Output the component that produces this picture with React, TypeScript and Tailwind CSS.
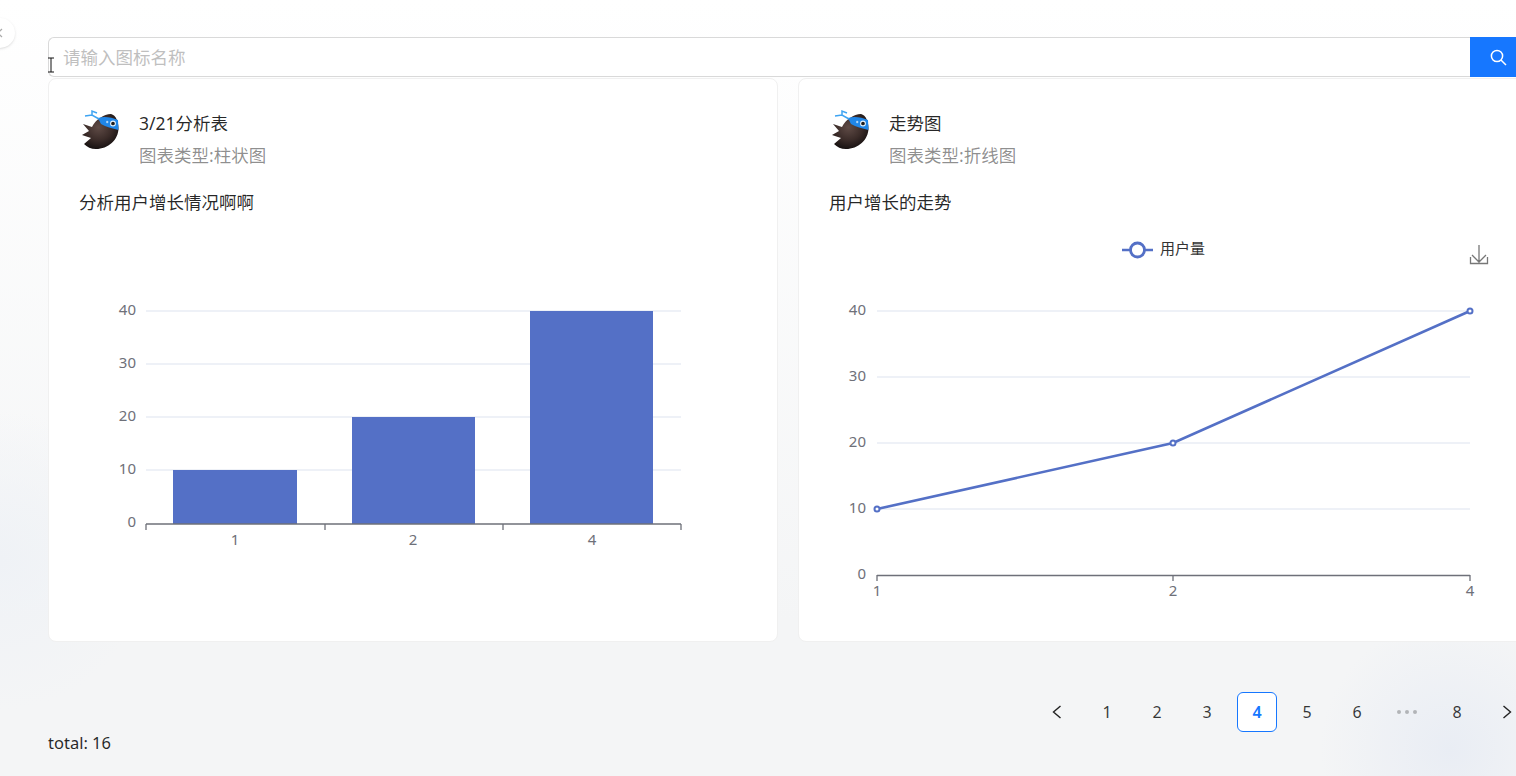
const pages = ["1", "2", "3", "4", "5", "6", "...", "8"];

function Avatar() {
  return (
    <svg width="40" height="40" viewBox="0 0 40 40" className="shrink-0">
      <defs>
        <radialGradient id="bird" cx="0.45" cy="0.38" r="0.68">
          <stop offset="0" stopColor="#5f4b46" />
          <stop offset="0.55" stopColor="#3a2b28" />
          <stop offset="1" stopColor="#100c0c" />
        </radialGradient>
      </defs>
      <path
        d="M3 15 L12 18 C15 11 24 5 31 5 C36 6 38.5 13 38.5 19 C38.5 31 28 40 16 40 C11 40 7 38 4 35 L11 29 L2 26 L9 22 Z"
        fill="url(#bird)"
      />
      <path d="M18 9 C24 7 31 8 38 11 L38.5 21 C32 19 26 18 21 15 Z" fill="#1f86e8" />
      <path d="M19 10 L12 6 L5 7 M12 6 L12 2 L17 4" stroke="#3fa4f2" strokeWidth="1.5" fill="none" />
      <circle cx="33" cy="14.5" r="2.4" fill="#1c1c1c" stroke="#e6f2fb" strokeWidth="1.1" />
      <path d="M26 13 H28.4 M27.2 11.8 V14.2" stroke="#e6f2fb" strokeWidth="0.8" />
    </svg>
  );
}

function AxisText({ x, y, anchor, children }: { x: number; y: number; anchor: "end" | "middle"; children: string }) {
  return (
    <text x={x} y={y} textAnchor={anchor} dominantBaseline="central" fontSize="15" fill="#6e7079" fontFamily="'Noto Sans', sans-serif">
      {children}
    </text>
  );
}

function BarChart() {
  const grid = [311, 364, 417, 470];
  const bars = [
    { x: 173, y: 470, w: 124, h: 54 },
    { x: 352, y: 417, w: 123, h: 107 },
    { x: 530, y: 311, w: 123, h: 213 },
  ];
  return (
    <svg viewBox="79 228 700 400" className="h-[400px] w-[700px]">
      {grid.map((y) => (
        <line key={y} x1="146" x2="681" y1={y} y2={y} stroke="#dde3f0" strokeWidth="1.2" />
      ))}
      {bars.map((b) => (
        <rect key={b.x} x={b.x} y={b.y} width={b.w} height={b.h} fill="#5470c6" />
      ))}
      <line x1="146" x2="681" y1="524" y2="524" stroke="#6e7079" strokeWidth="1.4" />
      {[146, 325, 503, 681].map((x) => (
        <line key={x} x1={x} x2={x} y1="524" y2="530" stroke="#6e7079" strokeWidth="1.3" />
      ))}
      {["40", "30", "20", "10", "0"].map((t, i) => (
        <AxisText key={t} x={136} y={[309, 362, 415, 468, 521][i]} anchor="end">
          {t}
        </AxisText>
      ))}
      <AxisText x={235} y={539} anchor="middle">1</AxisText>
      <AxisText x={413} y={539} anchor="middle">2</AxisText>
      <AxisText x={592} y={539} anchor="middle">4</AxisText>
    </svg>
  );
}

function LineChart() {
  const points = [
    [877, 509],
    [1173, 443],
    [1470, 311],
  ];
  return (
    <svg viewBox="829 228 700 400" className="h-[400px] w-[700px]">
      <line x1="1122" x2="1153" y1="250" y2="250" stroke="#5470c6" strokeWidth="2.6" />
      <circle cx="1137.5" cy="250" r="7" fill="#fff" stroke="#5470c6" strokeWidth="2.8" />
      <text x="1160" y="247" dominantBaseline="central" fontSize="15" fill="#333" fontFamily="'Noto Sans CJK SC', sans-serif">
        用户量
      </text>
      <path d="M1479 245 V262 M1472 255 L1479 262 L1486 255 M1470.5 257 V263.5 H1487.5 V257" fill="none" stroke="#777" strokeWidth="1.3" />
      {[311, 377, 443, 509].map((y) => (
        <line key={y} x1="877" x2="1470" y1={y} y2={y} stroke="#dde3f0" strokeWidth="1.2" />
      ))}
      <line x1="877" x2="1470" y1="575.5" y2="575.5" stroke="#6e7079" strokeWidth="1.4" />
      {[877, 1173, 1470].map((x) => (
        <line key={x} x1={x} x2={x} y1="575" y2="581" stroke="#6e7079" strokeWidth="1.3" />
      ))}
      <polyline points={points.map((p) => p.join(",")).join(" ")} fill="none" stroke="#5470c6" strokeWidth="2.6" />
      {points.map(([x, y]) => (
        <circle key={x} cx={x} cy={y} r="2.5" fill="#fff" stroke="#5470c6" strokeWidth="2" />
      ))}
      {["40", "30", "20", "10", "0"].map((t, i) => (
        <AxisText key={t} x={866} y={[309, 375, 441, 507, 573][i]} anchor="end">
          {t}
        </AxisText>
      ))}
      <AxisText x={877} y={590} anchor="middle">1</AxisText>
      <AxisText x={1173} y={590} anchor="middle">2</AxisText>
      <AxisText x={1470} y={590} anchor="middle">4</AxisText>
    </svg>
  );
}

function ChartCard({ title, type, desc, children }: { title: string; type: string; desc: string; children: React.ReactNode }) {
  return (
    <div className="h-[564px] overflow-hidden rounded-lg border border-[#f0f0f0] bg-white pl-[30px] pt-[30px]">
      <div className="flex gap-[19px] pl-px">
        <Avatar />
        <div className="pt-[2px]">
          <div className="text-[17.5px] leading-6 text-[#000000d9]">{title}</div>
          <div className="mt-[8px] text-[17.5px] leading-6 text-[#00000073]">{type}</div>
        </div>
      </div>
      <p className="mt-[23px] text-[17.5px] leading-6 text-[#000000d9]">{desc}</p>
      <div className="mt-[14px]">{children}</div>
    </div>
  );
}

function Chevron({ right }: { right?: boolean }) {
  return (
    <svg width="12" height="16" viewBox="0 0 12 16" fill="none" stroke="#222" strokeWidth="1.4">
      <path d={right ? "M2.5 2 L9.5 8 L2.5 14" : "M9.5 2 L2.5 8 L9.5 14"} />
    </svg>
  );
}

export default function App() {
  return (
    <div
      className="relative h-[776px] w-[1516px] overflow-hidden bg-[radial-gradient(circle_at_1450px_750px,#e9edf4_0,transparent_130px),radial-gradient(circle_at_0px_560px,#eff2f6_0,transparent_150px),linear-gradient(180deg,#ffffff_0,#f4f5f6_80%)] pl-12 pt-[37px]"
      style={{ fontFamily: "'Noto Sans', 'Noto Sans CJK SC', sans-serif" }}
    >
      {/* collapse button */}
      <div className="absolute left-[-15px] top-[18px] flex h-[30px] w-[30px] items-center justify-end rounded-full bg-white pr-[11px] shadow-sm">
        <svg width="8" height="10" viewBox="0 0 8 10" fill="none" stroke="#aaa" strokeWidth="1.3">
          <path d="M6 1 L1.5 5 L6 9" />
        </svg>
      </div>

      {/* text cursor */}
      <svg className="absolute left-[47px] top-[57px]" width="8" height="16" viewBox="0 0 8 16" fill="none" stroke="#111" strokeWidth="1">
        <path d="M1 1 H7 M4 1 V15 M1 15 H7" />
      </svg>

      <div className="flex h-10 w-[1480px]">
        <input
          placeholder="请输入图标名称"
          className="h-10 min-w-0 flex-1 rounded-l-md border border-r-0 border-[#d9d9d9] bg-white px-[14px] text-[17.5px] outline-none placeholder:text-[#bfbfbf]"
        />
        <button className="flex h-10 w-[58px] items-center bg-[#1677ff] pl-[20px]">
          <svg width="17" height="17" viewBox="0 0 17 17" fill="none" stroke="#fff" strokeWidth="1.5">
            <circle cx="7" cy="7" r="5.6" />
            <path d="M11 11 L16 16" />
          </svg>
        </button>
      </div>

      <div className="mt-px grid w-[1480px] grid-cols-2 gap-5">
        <ChartCard title="3/21分析表" type="图表类型:柱状图" desc="分析用户增长情况啊啊">
          <BarChart />
        </ChartCard>
        <ChartCard title="走势图" type="图表类型:折线图" desc="用户增长的走势">
          <LineChart />
        </ChartCard>
      </div>

      <div className="mt-[50px] flex w-[1479px] justify-end gap-[10px]">
        <div className="flex h-10 w-10 items-center justify-center">
          <Chevron />
        </div>
        {pages.map((p) =>
          p === "..." ? (
            <div key={p} className="flex h-10 w-10 items-center justify-center gap-[4px]">
              <span className="h-1 w-1 rounded-full bg-[#00000040]" />
              <span className="h-1 w-1 rounded-full bg-[#00000040]" />
              <span className="h-1 w-1 rounded-full bg-[#00000040]" />
            </div>
          ) : p === "4" ? (
            <div key={p} className="flex h-10 w-10 items-center justify-center rounded-md border border-[#1677ff] bg-white text-base font-semibold text-[#1677ff]">
              {p}
            </div>
          ) : (
            <div key={p} className="flex h-10 w-10 items-center justify-center text-base text-[#000000c8]">
              {p}
            </div>
          )
        )}
        <div className="flex h-10 w-10 items-center justify-center">
          <Chevron right />
        </div>
      </div>

      <div className="-mt-px text-[16.5px] leading-6 text-[#000000d9]">total: 16</div>
    </div>
  );
}
